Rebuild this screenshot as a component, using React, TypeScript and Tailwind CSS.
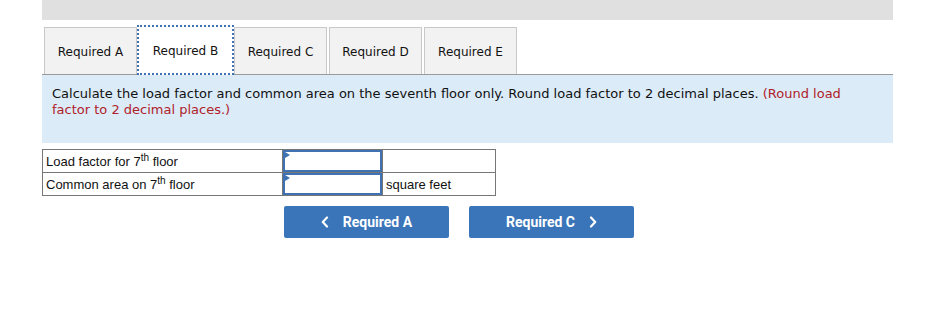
import React from "react";

const tabs = ["Required A", "Required B", "Required C", "Required D", "Required E"];

const Chevron = ({ dir }: { dir: "left" | "right" }) => (
    <svg width="8" height="12" viewBox="0 0 8 12" fill="none">
        <path
            d={dir === "left" ? "M6 1.5 L1.8 6 L6 10.5" : "M2 1.5 L6.2 6 L2 10.5"}
            stroke="white"
            strokeWidth="2.2"
            strokeLinecap="round"
            strokeLinejoin="round"
        />
    </svg>
);

const AnswerInput = () => (
    <div className="relative h-[22px] border-2 border-[#3e72b2] bg-white">
        {/* little corner marker */}
        <span className="absolute left-0 top-0 h-0 w-0 border-l-[5px] border-b-[3px] border-t-[3px] border-l-[#3e72b2] border-b-transparent border-t-transparent" />
    </div>
);

export default function App() {
    return (
        <div className="w-[929px] h-[314px] bg-white overflow-hidden">
            <div className="ml-[42px] w-[851px]">
                {/* Top grey strip */}
                <div className="h-[20px] bg-[#e0e0e0]" />

                {/* Tabs */}
                <div className="mt-[6px] flex h-[49px] items-end border-b border-[#9a9a9a] pl-[2px] font-['DejaVu_Sans',Verdana,sans-serif] text-[12px] text-[#111]">
                    {tabs.map((t, i) =>
                        i === 1 ? (
                            <div
                                key={t}
                                className="relative z-10 -mb-px flex h-[50px] w-[97px] items-center justify-center border-2 border-dotted border-[#3e72b2] bg-white pt-px"
                            >
                                {t}
                            </div>
                        ) : (
                            <div
                                key={t}
                                className={`flex h-[47px] w-[93px] items-center justify-center border border-b-0 border-[#c8c8c8] bg-[#f2f2f2] pt-px ${i > 2 ? "ml-[2px]" : ""}`}
                            >
                                {t}
                            </div>
                        )
                    )}
                </div>

                {/* Instructions */}
                <div className="h-[68px] bg-[#dbebf8] px-[10px] pt-[11px] font-['DejaVu_Sans',Verdana,sans-serif] text-[13px] leading-[16px] text-[#111]">
                    Calculate the load factor and common area on the seventh floor only. Round load factor to 2 decimal places.{" "}
                    <span className="text-[#b0222a]">(Round load factor to 2 decimal places.)</span>
                </div>

                {/* Answer table */}
                <table className="mt-[6px] w-[454px] border-collapse font-['Liberation_Sans',Arial,sans-serif] text-[13px] leading-[15px] text-[#111]">
                    <tbody>
                        <tr className="h-[23px]">
                            <td className="w-[240px] border border-[#777] px-[3px] py-0">
                                Load factor for 7<sup className="text-[10px]">th</sup> floor
                            </td>
                            <td className="w-[100px] border border-[#777] p-0">
                                <AnswerInput />
                            </td>
                            <td className="border border-[#777] px-[3px] py-0" />
                        </tr>
                        <tr className="h-[23px]">
                            <td className="border border-[#777] px-[3px] py-0">
                                Common area on 7<sup className="text-[10px]">th</sup> floor
                            </td>
                            <td className="border border-[#777] p-0">
                                <AnswerInput />
                            </td>
                            <td className="border border-[#777] px-[3px] py-0">square feet</td>
                        </tr>
                    </tbody>
                </table>

                {/* Navigation */}
                <div className="mt-[10px] flex gap-[20px] pl-[242px] font-['Roboto',sans-serif] text-[14px] font-bold text-white">
                    <button className="flex h-[32px] w-[165px] items-center justify-center gap-[14px] rounded-[2px] bg-[#3a75b9]">
                        <Chevron dir="left" />
                        Required A
                    </button>
                    <button className="flex h-[32px] w-[165px] items-center justify-center gap-[14px] rounded-[2px] bg-[#3a75b9]">
                        Required C
                        <Chevron dir="right" />
                    </button>
                </div>
            </div>
        </div>
    );
}
